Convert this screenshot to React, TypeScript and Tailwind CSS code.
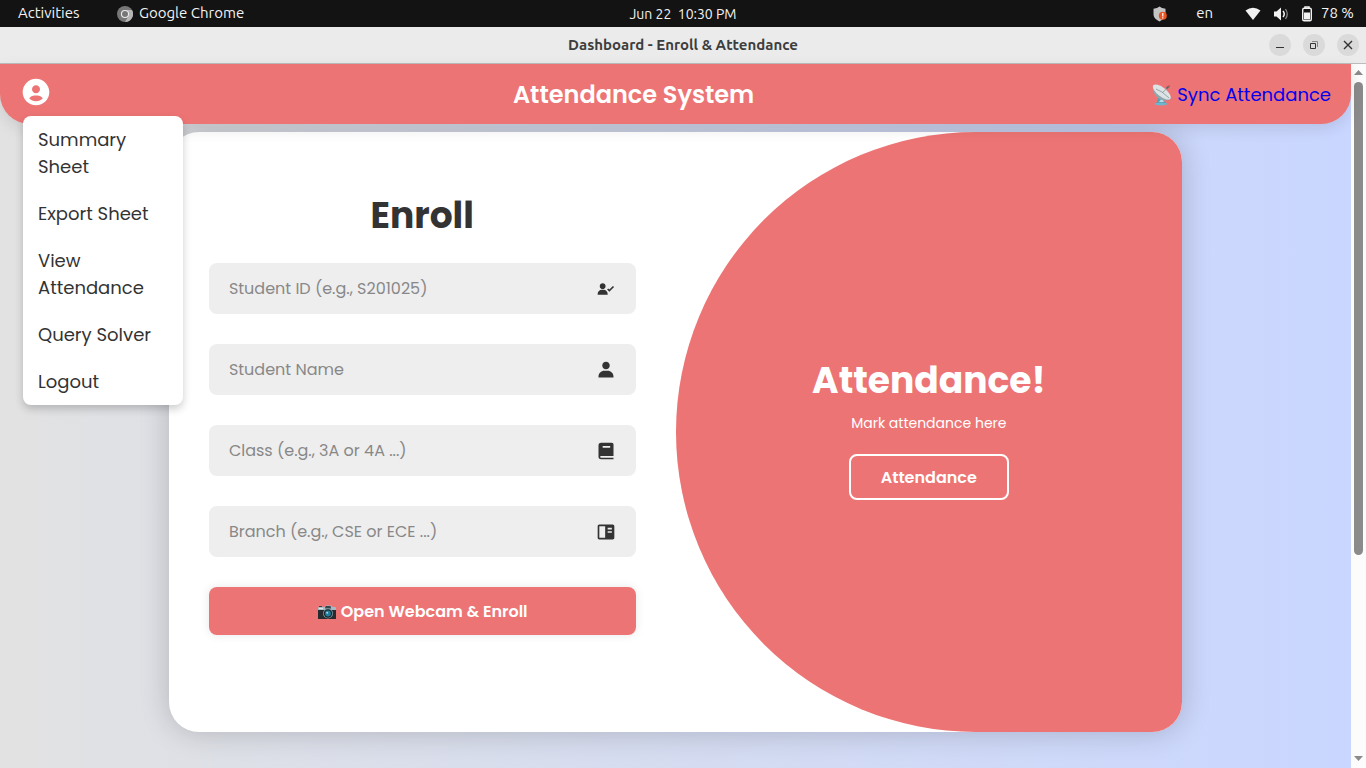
import { BiSolidUserCheck, BiSolidUser, BiSolidBook, BiSolidBookContent, BiSolidUserCircle } from "react-icons/bi";
import type { IconType } from "react-icons";

const MENU = ["Summary Sheet", "Export Sheet", "View Attendance", "Query Solver", "Logout"];

const FIELDS: { label: string; placeholder: string; Icon: IconType }[] = [
  { label: "Student ID", placeholder: "Student ID (e.g., S201025)", Icon: BiSolidUserCheck },
  { label: "Student Name", placeholder: "Student Name", Icon: BiSolidUser },
  { label: "Class", placeholder: "Class (e.g., 3A or 4A ...)", Icon: BiSolidBook },
  { label: "Branch", placeholder: "Branch (e.g., CSE or ECE ...)", Icon: BiSolidBookContent },
];

function ChromeIcon() {
  return (
    <svg viewBox="0 0 16 16" className="size-4" aria-hidden="true">
      <circle cx="8" cy="8" r="8" fill="#777" />
      <path d="M8 4h7A8 8 0 0 1 8 16l3.500-6A4 4 0 0 0 8 4z" fill="#b5b5b5" />
      <circle cx="8" cy="8" r="4.1" fill="#eee" />
      <circle cx="8" cy="8" r="3" fill="#777" />
    </svg>
  );
}

function ShieldIcon() {
  return (
    <svg viewBox="0 0 16 16" className="size-4" aria-hidden="true">
      <path d="M7.500 0.500 10 2l3.500.8V8c0 3.500-2.500 5.800-6 7.500C4 13.800 1.500 11.500 1.500 8V2.800L5 2z" fill="#c4c4c4" />
      <circle cx="10.800" cy="9.800" r="4" fill="#e95420" />
      <path d="M10.200 7h1.200v3.500h-1.200zM10.200 11.300h1.200v1.200h-1.200z" fill="#fff" />
    </svg>
  );
}

function WifiIcon() {
  return (
    <svg viewBox="0 0 16 16" className="size-4" aria-hidden="true">
      <path d="M.5 4.500Q8-1 15.500 4.500L8 14z" fill="#f2f2f2" />
    </svg>
  );
}

function VolumeIcon() {
  return (
    <svg viewBox="0 0 16 16" className="size-4" fill="none" aria-hidden="true">
      <path d="M1 5.500h2.500L8 1.500v13l-4.500-4H1z" fill="#f2f2f2" />
      <path d="M10 5q2.500 3 0 6" stroke="#f2f2f2" strokeWidth="1.500" />
      <path d="M12.500 3q3.500 5 0 10" stroke="#888" strokeWidth="1.300" />
    </svg>
  );
}

function BatteryIcon() {
  return (
    <svg viewBox="0 0 12 16" className="h-4 w-3" fill="none" aria-hidden="true">
      <path d="M4 2V1h4v1" stroke="#f2f2f2" strokeWidth="1.500" />
      <rect x="1.700" y="2.200" width="8.600" height="12.600" rx="1.500" stroke="#f2f2f2" strokeWidth="1.400" />
      <path d="M3 6.500h6v7H3z" fill="#f2f2f2" />
    </svg>
  );
}

function DishIcon() {
  return (
    <svg viewBox="0 0 22 22" className="size-[22px]" aria-hidden="true">
      <path d="M8 11 6 18l-2 2h12l-3-3-1-4z" fill="#5b9db3" />
      <path d="m8 18 3-4 2 4z" fill="#b8dbe5" />
      <ellipse cx="10" cy="20" rx="6.500" ry="1.400" fill="#6fb5cb" />
      <path d="M2 2C1 9 6 16 14 16.500q5 0 6-2.500z" fill="#91a5ad" />
      <ellipse cx="10.800" cy="8" rx="10.800" ry="4.500" transform="rotate(38 10.800 8)" fill="#dce3e5" />
      <path d="m5 5 6 3 7 6M11 9l6.500-6" stroke="#8e9ca1" strokeWidth=".9" fill="none" />
      <path d="m15.500 4.500 2-2" stroke="#596c75" strokeWidth="1.800" />
      <circle cx="18" cy="2.200" r="1" fill="#bf5353" />
    </svg>
  );
}

function CameraIcon() {
  return (
    <svg viewBox="0 0 20 16" className="h-4 w-5" aria-hidden="true">
      <path d="M1.500 3h6l1-1.500h6l1 1.500h3l.5 1v3H1V4z" fill="#a5bac2" />
      <path d="M1 6h18v8.500q0 .5-.5.500h-17q-.5 0-.5-.5z" fill="#252b2e" />
      <path d="M8.500 2h5l.7 2.500H8z" fill="#36474f" />
      <path d="M2 2h3v1H2z" fill="#36474f" />
      <rect x="2" y="4" width="4" height="1" fill="#d9e7ec" />
      <circle cx="11" cy="9.500" r="5" fill="#83969e" />
      <circle cx="11" cy="9.500" r="4.200" fill="#17272e" />
      <circle cx="11" cy="9.500" r="2.900" fill="#237d9c" />
      <circle cx="10.200" cy="8.700" r="1" fill="#9ddcee" />
    </svg>
  );
}

function SystemBar() {
  return (
    <div className="grid h-[27px] shrink-0 grid-cols-3 items-center bg-[#131313] font-['Ubuntu','Noto_Sans',sans-serif] text-[15px] text-[#f2f2f2]">
      <div className="flex items-center pl-[18px]">
        <span className="w-[99px]">Activities</span>
        <ChromeIcon />
        <span className="pl-1.5">Google Chrome</span>
      </div>
      <div className="text-center text-sm whitespace-pre">Jun 22  10:30 PM</div>
      <div className="flex items-center justify-end pr-3">
        <ShieldIcon />
        <span className="pr-8 pl-7">en</span>
        <WifiIcon />
        <span className="px-3"><VolumeIcon /></span>
        <BatteryIcon />
        <span className="pl-2">78 %</span>
      </div>
    </div>
  );
}

function TitleBar() {
  const control = "grid size-[22px] place-items-center rounded-full bg-[#dadada] text-[#333]";
  return (
    <div className="grid h-[37px] shrink-0 grid-cols-[1fr_auto_1fr] items-center border-b border-[#bcbcbc] bg-[#ebebeb]">
      <h1 className="col-start-2 font-['Ubuntu','Noto_Sans',sans-serif] text-[15px] font-bold text-[#3d3d3d]">Dashboard - Enroll &amp; Attendance</h1>
      <div className="flex justify-end gap-3 pr-[7px]">
        <button type="button" aria-label="Minimize" className={control}>
          <svg viewBox="0 0 10 10" className="size-2.5"><path d="M1 7h8v1H1z" fill="currentColor" /></svg>
        </button>
        <button type="button" aria-label="Restore" className={control}>
          <svg viewBox="0 0 10 10" className="size-2.5" fill="none"><path d="M1.500 3.500h5v5h-5z" stroke="currentColor" /><path d="M3 1.500h5.500V7" stroke="#888" /></svg>
        </button>
        <button type="button" aria-label="Close" className={control}>
          <svg viewBox="0 0 10 10" className="size-2.5"><path d="m1 1 8 8m0-8-8 8" stroke="currentColor" strokeWidth="1.400" /></svg>
        </button>
      </div>
    </div>
  );
}

function ScrollRail() {
  return (
    <div className="flex w-[15px] shrink-0 flex-col items-center bg-[#fcfcfc] text-[#8b8b8b]" aria-hidden="true">
      <svg viewBox="0 0 15 18" className="h-[18px] w-[15px] shrink-0"><path d="M3 11 7.500 6 12 11z" fill="currentColor" /></svg>
      <div className="h-[473px] w-[9px] shrink-0 rounded-full bg-current" />
      <div className="grow" />
      <svg viewBox="0 0 15 18" className="h-[18px] w-[15px] shrink-0"><path d="M3 6h9l-4.500 5z" fill="currentColor" /></svg>
    </div>
  );
}

function Header() {
  return (
    <header className="relative z-10 flex h-[60px] shrink-0 items-center justify-between rounded-b-[30px] bg-[#ed7474] px-5 pt-0.5 shadow-[0_5px_15px_rgba(0,0,0,0.1)]">
      <div className="w-24 pb-1.5">
        <button type="button" aria-label="Account menu" className="block text-white"><BiSolidUserCircle className="size-8" /></button>
        <nav className="absolute top-[52px] left-[23px] w-40 rounded-lg bg-white text-lg leading-[27px] text-[#333] shadow-[0_4px_8px_rgba(0,0,0,0.2)]">
          {MENU.map((item) => (
            <a key={item} href="#" className="block px-[15px] py-2.5">{item}</a>
          ))}
        </nav>
      </div>
      <h2 className="text-2xl font-semibold text-white">Attendance System</h2>
      <a href="#" className="flex items-center gap-1 text-lg text-[#0000ee]"><DishIcon />Sync Attendance</a>
    </header>
  );
}

export default function App() {
  return (
    <div className="flex h-screen flex-col overflow-hidden font-['Poppins','Inter',sans-serif]">
      <SystemBar />
      <TitleBar />
      <div className="flex min-h-0 grow">
        <div className="flex min-w-0 grow flex-col bg-linear-to-r from-[#e2e2e2] to-[#c9d6ff]">
          <Header />
          <main className="mx-auto mt-2 grid h-[600px] w-3/4 shrink-0 grid-cols-2 overflow-hidden rounded-[30px] bg-white shadow-[0_0_30px_rgba(0,0,0,0.2)]">
            <form className="flex flex-col justify-center px-10 pb-10 text-[#333]">
              <h2 className="mb-5 text-center text-4xl leading-[54px] font-bold">Enroll</h2>
              {FIELDS.map(({ label, placeholder, Icon }) => (
                <label key={label} className="mb-[30px] flex h-[51px] items-center rounded-lg bg-[#eee] px-5">
                  <input type="text" aria-label={label} placeholder={placeholder} className="h-full min-w-0 grow bg-transparent text-base outline-none placeholder:text-[#888]" />
                  <Icon className="size-5" />
                </label>
              ))}
              <button type="button" className="flex h-12 items-center justify-center gap-1 rounded-lg bg-[#ed7474] pt-px text-base font-semibold text-white shadow-[0_0_10px_rgba(0,0,0,0.1)]">
                <CameraIcon />Open Webcam &amp; Enroll
              </button>
            </form>
            <section className="flex flex-col items-center justify-center rounded-l-[300px] bg-[#ed7474] pb-2.5 text-white">
              <h2 className="text-4xl leading-[54px] font-bold">Attendance!</h2>
              <p className="mt-1 mb-5 text-sm leading-[22px]">Mark attendance here</p>
              <button type="button" className="h-[46px] w-40 rounded-lg border-2 border-white pt-px text-base font-semibold">Attendance</button>
            </section>
          </main>
        </div>
        <ScrollRail />
      </div>
    </div>
  );
}
